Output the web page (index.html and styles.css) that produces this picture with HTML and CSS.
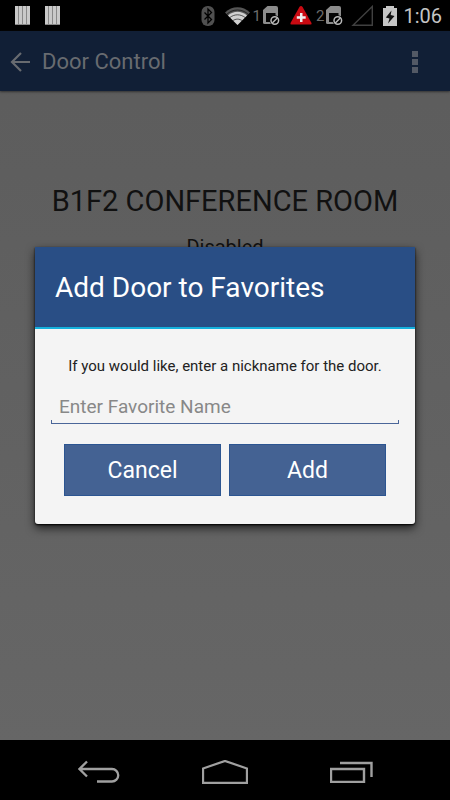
FILE: index.html
```html
<!DOCTYPE html>
<html lang="en">
<head>
<meta charset="utf-8">
<meta name="viewport" content="width=device-width, initial-scale=1">
<title>Door Control</title>
<link rel="stylesheet" href="styles.css">
</head>
<body>
<header class="status">
  <div class="notices">
    <svg class="bars" width="15" height="19" viewBox="0 0 15 19" aria-hidden="true"><path fill="#888" d="M0 0h15v19H0z"/><path fill="#c9c9c9" d="M0 0h3v18H0zM4 0h3v18H4zM8 0h3v18H8zM12 0h3v18h-3z"/></svg>
    <svg class="bars" width="15" height="19" viewBox="0 0 15 19" aria-hidden="true"><path fill="#888" d="M0 0h15v19H0z"/><path fill="#c9c9c9" d="M0 0h3v18H0zM4 0h3v18H4zM8 0h3v18H8zM12 0h3v18h-3z"/></svg>
  </div>
  <div class="system">
    <svg width="14" height="20" viewBox="0 0 14 20" aria-hidden="true"><rect x=".5" width="13" height="20" rx="6" fill="#505050"/><path d="M3.500 6.500l7 7-3.500 3.500V3l3.500 3.500-7 7" fill="none" stroke="#000" stroke-width="1.300"/></svg>
    <svg class="wifi" width="25" height="18" viewBox="0 0 25 18" aria-hidden="true"><path fill="#555" d="M0 5.500C7-1.500 18-1.500 25 5.500L12.500 18z"/><path fill="#d0d0d0" d="M3 8.500c5.500-5 13.500-5 19 0L12.500 18z"/><path d="M1.500 7.500c6.500-6 15.500-6 22 0M4.500 10.800c5-4 11-4 16 0M7.500 14c3-2.500 7-2.500 10 0" fill="none" stroke="#000" stroke-width=".6"/></svg>
    <div class="sim">
      <span>1</span>
      <svg width="17" height="20" viewBox="0 0 17 20" aria-hidden="true"><path fill="#8c8c8c" d="M4.500 0H13q2 0 2 2v16H1.500Q0 18 0 16.500V4z"/><path fill="#050505" d="M3 7h9.500v9H3z"/><circle cx="11.800" cy="14.500" r="5.200" fill="#000"/><circle cx="11.800" cy="14.500" r="3.800" fill="none" stroke="#b8b8b8" stroke-width="1.500"/><path d="M9.300 17l5-5" stroke="#b8b8b8" stroke-width="1.500"/></svg>
    </div>
    <svg class="alert" width="22" height="19" viewBox="0 0 22 19" aria-hidden="true"><path fill="#c90a12" d="M11 0q1 0 1.600 1L21.500 17q.5 1.500-1 1.500h-19Q0 18.500.5 17L9.400 1Q10 0 11 0z"/><path fill="#eee" d="M10 7h2.500v3.200h3.200v2.500h-3.200V16H10v-3.300H6.800v-2.500H10z"/></svg>
    <div class="sim second">
      <span>2</span>
      <svg width="17" height="20" viewBox="0 0 17 20" aria-hidden="true"><path fill="#8c8c8c" d="M4.500 0H13q2 0 2 2v16H1.500Q0 18 0 16.500V4z"/><path fill="#050505" d="M3 7h9.500v9H3z"/><circle cx="11.800" cy="14.500" r="5.200" fill="#000"/><circle cx="11.800" cy="14.500" r="3.800" fill="none" stroke="#b8b8b8" stroke-width="1.500"/><path d="M9.300 17l5-5" stroke="#b8b8b8" stroke-width="1.500"/></svg>
    </div>
    <svg class="signal" width="22" height="21" viewBox="0 0 22 21" aria-hidden="true"><path d="M21.300 1.500v18.800H2z" fill="none" stroke="#404040" stroke-width="1.400"/></svg>
    <svg class="battery" width="14" height="20" viewBox="0 0 14 20" aria-hidden="true"><path fill="#c6c6c6" d="M3 0h8v2h3v18H0V2h3z"/><path fill="#111" d="M8.500 4.500L2.800 11.500l3.700 1L5 17.500l6.500-7.500-3.800-1z"/></svg>
    <time class="clock">1:06</time>
  </div>
</header>
<div class="screen">
  <div class="appbar">
    <button class="icon-button" type="button" aria-label="Back"><svg width="20" height="20" viewBox="0 0 20 20"><path d="M20 10H2M11 1l-9 9 9 9" fill="none" stroke="#686b70" stroke-width="2.200"/></svg></button>
    <h1>Door Control</h1>
    <button class="icon-button more" type="button" aria-label="More options"><svg width="6" height="22" viewBox="0 0 6 22"><path fill="#535965" d="M0 0h6v6H0zM0 8h6v6H0zM0 16h6v6H0z"/></svg></button>
  </div>
  <main>
    <h2>B1F2 CONFERENCE ROOM</h2>
    <p class="state">Disabled</p>
  </main>
  <div class="overlay">
    <form class="dialog" role="dialog" aria-labelledby="dialog-title">
      <h2 id="dialog-title">Add Door to Favorites</h2>
      <div class="dialog-body">
        <label for="nickname">If you would like, enter a nickname for the door.</label>
        <div class="field"><input id="nickname" type="text" placeholder="Enter Favorite Name"></div>
        <div class="actions">
          <button type="button">Cancel</button>
          <button type="button">Add</button>
        </div>
      </div>
    </form>
  </div>
</div>
<nav class="navbar" aria-label="System">
  <button type="button" aria-label="Back"><svg width="42" height="24" viewBox="0 0 42 24"><path d="M9 1.500L1.500 9 9 16.500M1.500 9H34a6.200 6.200 0 0 1 0 12.500H19" fill="none" stroke="#a0a0a0" stroke-width="2.300"/></svg></button>
  <button type="button" aria-label="Home"><svg width="46" height="24" viewBox="0 0 46 24"><path d="M1 23V8.500L23 1l22 7.500V23z" fill="none" stroke="#a0a0a0" stroke-width="2.300"/></svg></button>
  <button type="button" aria-label="Recent apps"><svg width="43" height="22" viewBox="0 0 43 22"><path d="M1 8h33v13H1zM10 2h31.500v14" fill="none" stroke="#a0a0a0" stroke-width="2.400"/></svg></button>
</nav>
</body>
</html>
```
FILE: styles.css
```css
* {
  box-sizing: border-box;
}

body {
  margin: 0;
  min-height: 100vh;
  display: flex;
  flex-direction: column;
  background: #000;
  font-family: Roboto, "Liberation Sans", sans-serif;
}

h1,
h2,
p {
  margin: 0;
  font-weight: 400;
}

button {
  padding: 0;
  border: 0;
  background: none;
  font: inherit;
}

svg {
  display: block;
}

.status {
  height: 31px;
  padding: 0 8px 0 15px;
  display: flex;
  justify-content: space-between;
  align-items: center;
}

.notices {
  display: flex;
  gap: 15px;
}

.system {
  display: flex;
  align-items: center;
  gap: 10px;
}

.sim {
  display: flex;
  align-items: center;
  gap: 2px;
  margin-left: -7px;
  color: #6c6c6c;
  font-size: 15px;
}

.second {
  margin-left: -6px;
}

.signal {
  margin-left: -2px;
}

.clock {
  margin-left: -4px;
  color: #c4c4c4;
  font-size: 20px;
  line-height: 30px;
}

.screen {
  position: relative;
  flex: 1;
  display: flex;
  flex-direction: column;
  background: linear-gradient(#5c5c5c, #666);
}

.appbar {
  height: 60px;
  padding: 1px 32px 0 10px;
  display: flex;
  align-items: center;
  gap: 12px;
  background: #111f36;
  box-shadow: 0 1px 2px #333;
}

.appbar h1 {
  flex: 1;
  color: #686b70;
  font-size: 22px;
}

main {
  padding: 92px 16px 0;
  color: #111;
  text-align: center;
}

main h2 {
  font-size: 29px;
  line-height: 36px;
}

.state {
  margin-top: 16px;
  font-size: 20px;
  line-height: 24px;
}

.overlay {
  position: absolute;
  inset: 0;
  padding: 0 35px;
  display: grid;
  align-items: center;
}

.dialog {
  border-radius: 0 0 3px 3px;
  background: #f4f4f4;
  box-shadow: 0 1px 2px #000, 0 4px 10px rgba(0, 0, 0, 0.7);
}

.dialog h2 {
  padding: 2px 20px 0;
  border-bottom: 2px solid #16b1dc;
  background: #294e85;
  color: #fff;
  font-size: 28px;
  line-height: 78px;
}

.dialog-body {
  padding: 25px 16px 28px;
  display: flex;
  flex-direction: column;
}

label {
  color: #222;
  font-size: 15px;
  line-height: 24px;
  text-align: center;
}

.field {
  margin-top: 12px;
  padding-bottom: 1px;
  background:
    linear-gradient(#4a6699, #4a6699) left bottom / 1px 4px no-repeat,
    linear-gradient(#4a6699, #4a6699) right bottom / 1px 4px no-repeat,
    linear-gradient(#4a6699, #4a6699) left bottom / 100% 1px no-repeat;
}

input {
  display: block;
  width: 100%;
  height: 33px;
  padding: 0 8px;
  border: 0;
  outline: 0;
  background: none;
  color: #222;
  font: 19px Roboto, "Liberation Sans", sans-serif;
}

input::placeholder {
  color: #888;
}

.actions {
  margin-top: 20px;
  padding: 0 13px;
  display: grid;
  grid-template-columns: 1fr 1fr;
  gap: 8px;
}

.actions button {
  height: 52px;
  border: 1px solid #2c5591;
  background: #446293;
  color: #fff;
  font-size: 23px;
}

.navbar {
  height: 60px;
  padding: 3px 36px 0;
  display: grid;
  grid-template-columns: repeat(3, 1fr);
}

.navbar button {
  display: grid;
  place-items: center;
}
```
